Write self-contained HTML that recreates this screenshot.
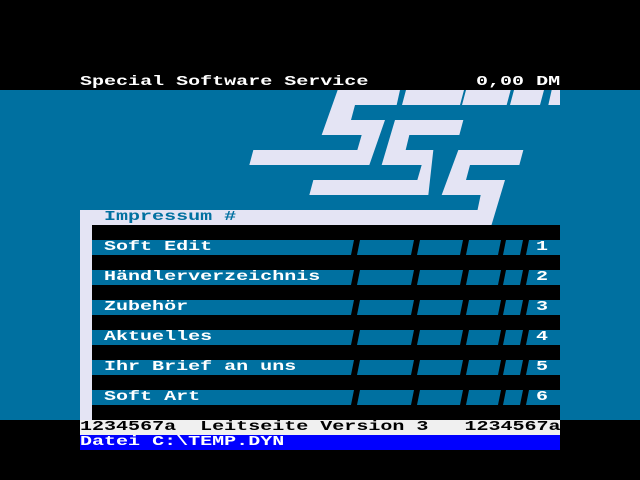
<!DOCTYPE html>
<html><head><meta charset="utf-8"><style>
html,body{margin:0;padding:0;background:#000;width:640px;height:480px;overflow:hidden;position:relative}
.t{position:absolute;font-family:"Liberation Mono",monospace;font-weight:bold;font-size:14px;line-height:15px;height:15px;white-space:pre;letter-spacing:0}
.t span{display:inline-block;transform:scaleX(1.43);transform-origin:0 0}
.r{position:absolute;left:92px;width:468px;height:15px;background:#0070a0}
</style></head><body>
<div style="position:absolute;left:0;top:90px;width:640px;height:330px;background:#0070a0"></div>
<svg style="position:absolute;left:240px;top:70px" width="330" height="160" viewBox="0 0 990 480">
<g fill="#e4e4f4">
<polygon points="293,60 480,60 470,105 345,105 333,150 435,150 388,285 28,285 40,240 352,240 365,195 245,195"/>
<polygon points="498,60 672,60 660,105 486,105"/>
<polygon points="678,60 812,60 800,105 666,105"/>
<polygon points="822,60 912,60 900,105 810,105"/>
<polygon points="935,60 960,60 960,105 925,105"/>
<polygon points="465,150 670,150 658,195 508,195 497,240 580,240 565,375 208,375 220,330 532,330 545,285 425,285"/>
<polygon points="655,240 850,240 838,285 690,285 678,330 795,330 750,480 700,480 722,375 605,375"/>
</g>
</svg>
<div style="position:absolute;left:80px;top:210px;width:408px;height:15px;background:#e4e4f4"></div>
<svg style="position:absolute;left:480px;top:200px" width="20" height="25"><polygon points="0,0 12,0 7,25 0,25" fill="#e4e4f4"/></svg>
<div style="position:absolute;left:80px;top:225px;width:12px;height:195px;background:#e4e4f4"></div>
<div style="position:absolute;left:92px;top:225px;width:468px;height:195px;background:#000"></div>
<div class="r" style="top:240px"></div><div class="r" style="top:270px"></div><div class="r" style="top:300px"></div>
<div class="r" style="top:330px"></div><div class="r" style="top:360px"></div><div class="r" style="top:390px"></div>
<svg style="position:absolute;left:0;top:0" width="640" height="480">
<defs><g id="s" fill="#000">
<polygon points="354,0 360,0 357,15 351,15"/>
<polygon points="414,0 420,0 417,15 411,15"/>
<polygon points="463,0 469,0 466,15 460,15"/>
<polygon points="501,0 506,0 503,15 498,15"/>
<polygon points="523,0 529,0 526,15 520,15"/>
</g></defs>
<use href="#s" y="240"/><use href="#s" y="270"/><use href="#s" y="300"/>
<use href="#s" y="330"/><use href="#s" y="360"/><use href="#s" y="390"/>
</svg>
<div class="t" style="left:80px;top:75px;color:#fff"><span>Special Software Service</span></div>
<div class="t" style="left:476px;top:75px;color:#fff"><span>0,00 DM</span></div>
<div class="t" style="left:104px;top:210px;color:#0070a0"><span>Impressum #</span></div>
<div class="t" style="left:104px;top:240px;color:#fff"><span>Soft Edit</span></div>
<div class="t" style="left:104px;top:270px;color:#fff"><span>Händlerverzeichnis</span></div>
<div class="t" style="left:104px;top:300px;color:#fff"><span>Zubehör</span></div>
<div class="t" style="left:104px;top:330px;color:#fff"><span>Aktuelles</span></div>
<div class="t" style="left:104px;top:360px;color:#fff"><span>Ihr Brief an uns</span></div>
<div class="t" style="left:104px;top:390px;color:#fff"><span>Soft Art</span></div>
<div class="t" style="left:536px;top:240px;color:#fff"><span>1</span></div>
<div class="t" style="left:536px;top:270px;color:#fff"><span>2</span></div>
<div class="t" style="left:536px;top:300px;color:#fff"><span>3</span></div>
<div class="t" style="left:536px;top:330px;color:#fff"><span>4</span></div>
<div class="t" style="left:536px;top:360px;color:#fff"><span>5</span></div>
<div class="t" style="left:536px;top:390px;color:#fff"><span>6</span></div>
<div class="t" style="left:80px;top:420px;width:480px;background:#f0f0f0;color:#000;overflow:hidden"><span>1234567a  Leitseite Version 3   1234567a</span></div>
<div class="t" style="left:80px;top:435px;width:480px;background:#0000ff;color:#fff;overflow:hidden"><span>Datei C:\TEMP.DYN</span></div>
</body></html>
